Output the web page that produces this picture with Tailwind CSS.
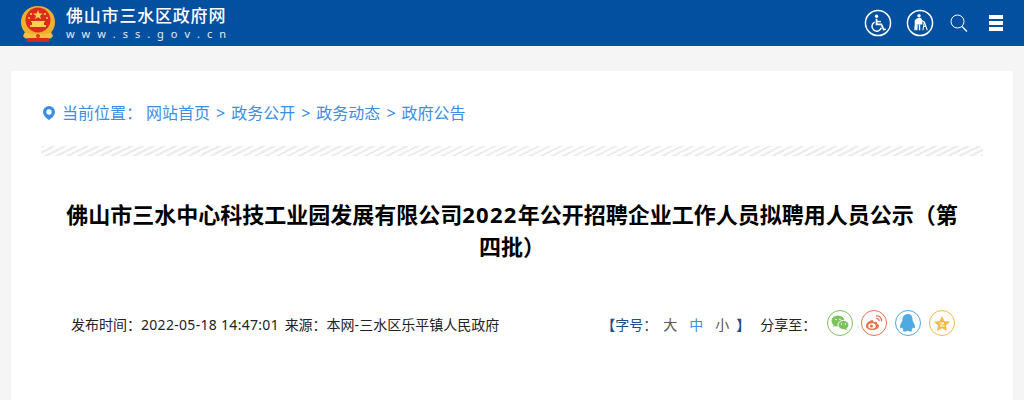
<!DOCTYPE html>
<html lang="zh-CN">
<head>
<meta charset="utf-8">
<script src="https://cdn.jsdelivr.net/npm/@tailwindcss/browser@4"></script>
</head>
<body class="m-0 h-[400px] w-[1024px] overflow-hidden bg-[#f5f5f5] font-['Noto_Sans','Noto_Sans_CJK_SC',sans-serif]">
<header class="flex h-[46px] items-center justify-between bg-[#02509f] pl-[20px] pr-[21px] text-white">
  <div class="flex items-center gap-[10px]">
    <svg class="h-[40px] w-[36px]" viewBox="0 0 36 40">
      <path d="M18 3C8 3 1 10 1 19c0 6 3 10 7 13h20c4-3 7-7 7-13C35 10 28 3 18 3z" fill="#eeb02f"/>
      <circle cx="18" cy="17" r="12.5" fill="#de2a1c"/>
      <path d="M18 7l1.300 3.600h3.700l-3 2.200 1.100 3.500-3.100-2.100-3.100 2.100 1.100-3.500-3-2.200h3.700z" fill="#f6d34a"/>
      <circle cx="11" cy="11" r="1.100" fill="#f6d34a"/><circle cx="25" cy="11" r="1.100" fill="#f6d34a"/><circle cx="9" cy="15" r="1" fill="#f6d34a"/><circle cx="27" cy="15" r="1" fill="#f6d34a"/>
      <path d="M10 24h16v-2h-2v-3h1v-1H11v1h1v3h-2z" fill="#f6d34a"/>
      <path d="M5 29c4 3 8 2 13 2s9 1 13-2l2 4c-2 3-4 3-6 2H9c-2 1-4 1-6-2z" fill="#f2c043"/>
      <path d="M8 35h20l2 3c-2 1-3 1-4 1H10c-1 0-2 0-4-1z" fill="#d8281b"/>
      <circle cx="18" cy="33" r="2" fill="#e0352a"/>
    </svg>
    <div class="flex w-[160px] flex-col">
      <div class="text-[17px] leading-[20px] font-medium tracking-[0.8px] whitespace-nowrap">佛山市三水区政府网</div>
      <div class="mt-[2px] flex justify-between text-[11px] leading-[12px] tracking-normal text-[#e3ecf6]">
        <span>w</span><span>w</span><span>w</span><span>.</span><span>s</span><span>s</span><span>.</span><span>g</span><span>o</span><span>v</span><span>.</span><span>c</span><span>n</span>
      </div>
    </div>
  </div>
  <div class="flex items-center">
    <svg class="h-[28px] w-[28px]" viewBox="0 0 29 29" fill="none" stroke="#fff">
      <circle cx="14.500" cy="14.500" r="13" stroke-width="1.500"/>
      <circle cx="13" cy="7.500" r="1.700" fill="#fff" stroke="none"/>
      <path d="M13 10v6h5l2.500 5.500 2-.8" stroke-width="1.800"/>
      <path d="M13 13h4.500" stroke-width="1.500"/>
      <path d="M11 13.500a5 5 0 1 0 7 6" stroke-width="1.500"/>
    </svg>
    <svg class="ml-[14px] h-[28px] w-[28px]" viewBox="0 0 29 29" fill="none" stroke="#fff">
      <circle cx="14.500" cy="14.500" r="13" stroke-width="1.500"/>
      <circle cx="13.500" cy="7" r="1.800" fill="#fff" stroke="none"/>
      <path d="M9 12c1-2 3-3 5-3s3 2 3 4v3h-6l-1 6h-1.500l.5-6z" fill="#fff" stroke="none"/>
      <path d="M11.500 16l-.5 6M14 16v6" stroke-width="1.500"/>
      <path d="M16 12l3 1.500M19 13l-1.500 9M19 13l3 9M18 18h3" stroke-width="1.100"/>
    </svg>
    <svg class="ml-[16px] h-[18px] w-[18px]" viewBox="0 0 18 18" fill="none" stroke="#fff">
      <circle cx="7.500" cy="7.500" r="6.500" stroke-width="1"/>
      <path d="M12 12.500l5 5" stroke-width="1.200"/>
    </svg>
    <div class="ml-[21px] flex w-[14px] flex-col gap-[2.500px]">
      <div class="h-[3.500px] bg-white"></div><div class="h-[3.500px] bg-white"></div><div class="h-[3.500px] bg-white"></div>
    </div>
  </div>
</header>
<main class="mx-[11px] mt-[25px] h-[340px] bg-white px-[30px] pt-[29px]">
  <nav class="flex h-[26px] items-center text-[16px] leading-[26px] whitespace-nowrap text-[#3a8ee6]">
    <svg class="ml-[2px] h-[14px] w-[12px]" viewBox="0 0 12 14"><path fill-rule="evenodd" d="M6 0a6 6 0 0 1 6 6c0 3-3 6-6 8-3-2-6-5-6-8a6 6 0 0 1 6-6zm0 3.300a2.700 2.700 0 1 0 0 5.400 2.700 2.700 0 0 0 0-5.400z" fill="#3a8ee6"/></svg>
    <span class="ml-[7px]">当前位置：</span>
    <span class="ml-[4px]">网站首页</span><span class="mx-[6px]">&gt;</span><span>政务公开</span><span class="mx-[6px]">&gt;</span><span>政务动态</span><span class="mx-[6px]">&gt;</span><span>政府公告</span>
  </nav>
  <div class="mt-[20px] h-[10px] bg-[repeating-linear-gradient(153deg,#ececec_0,#ececec_2px,#fdfdfd_2px,#fdfdfd_5px)]"></div>
  <h1 class="mt-[42px] px-[24px] text-center text-[22px] leading-[32px] font-bold text-black">佛山市三水中心科技工业园发展有限公司<span class="tracking-[1.300px]">2022</span>年公开招聘企业工作人员拟聘用人员公示（第四批）</h1>
  <div class="mt-[49px] flex h-[26px] items-center text-[14px] whitespace-nowrap text-[#222]">
    <span class="ml-[30px]">发布时间：<span class="tracking-[0.300px]">2022-05-18 14:47:01</span> <span class="ml-[2px]">来源：本网-三水区乐平镇人民政府</span></span>
    <span class="ml-[102px] font-bold text-[#1a4f86]">【</span><span class="text-[#1a4f86]">字号：</span>
    <span class="ml-[6px] text-[#555]">大</span><span class="ml-[12px] text-[#3a8ee6]">中</span><span class="ml-[12px] text-[#555]">小</span>
    <span class="ml-[7px] font-bold text-[#1a4f86]">】</span>
    <span class="ml-[10px]">分享至：</span>
    <div class="mb-[2px] ml-[11px] flex gap-[8px]">
      <div class="flex h-[26px] w-[26px] items-center justify-center rounded-full border border-[#7cc35a]">
        <svg class="h-[16px] w-[18px]" viewBox="0 0 18 16" fill="#7cc35a"><ellipse cx="7" cy="6" rx="6.500" ry="5.500"/><path d="M3 9l-1 3 4-2z"/><ellipse cx="12.500" cy="10" rx="5.500" ry="4.600" stroke="#fff" stroke-width="1"/><path d="M15 13l1.500 2.500-4-1.500z"/><circle cx="5" cy="4.500" r=".8" fill="#fff"/><circle cx="9" cy="4.500" r=".8" fill="#fff"/><circle cx="10.500" cy="9" r=".7" fill="#fff"/><circle cx="14.500" cy="9" r=".7" fill="#fff"/></svg>
      </div>
      <div class="flex h-[26px] w-[26px] items-center justify-center rounded-full border border-[#e8734a]">
        <svg class="h-[16px] w-[18px]" viewBox="0 0 18 16" fill="none"><path d="M7 5C3.500 6 1 8.500 1 11c0 2.500 3 4 6.500 4S14 13 14 11c0-1.500-1.500-2-2-2 1-2-1-3-3.500-1.500 .3-1.500-.3-2.700-1.500-2.500z" fill="#e8734a"/><ellipse cx="7" cy="11" rx="3.700" ry="2.800" fill="#fff"/><circle cx="6.500" cy="11" r="1.600" fill="#e8734a"/><path d="M11 1c3.500-.5 6 2 5.500 5.500M11.300 3.500c1.800-.2 3 .9 2.800 2.700" stroke="#e8734a" stroke-width="1.300"/></svg>
      </div>
      <div class="flex h-[26px] w-[26px] items-center justify-center rounded-full border border-[#4fa9e3]">
        <svg class="h-[18px] w-[16px]" viewBox="0 0 16 18" fill="#4fa9e3"><path d="M8 0c3 0 4.500 2.300 4.500 5 0 1 0 1.500.5 2.500 1 1.500 2 3.500 2 5.500 0 1.500-1 1.500-2 .5-.3 1-1 1.800-1.500 2.200 1 .5 1 1.800-1.500 1.800-1 0-2-.5-2-.8h-1c0 .3-1 .8-2 .8-2.500 0-2.500-1.300-1.500-1.800C3 15.300 2.300 14.500 2 13.500c-1 1-2 1-2-.5 0-2 1-4 2-5.500.5-1 .5-1.500.5-2.500C2.500 2.300 5 0 8 0z"/></svg>
      </div>
      <div class="flex h-[26px] w-[26px] items-center justify-center rounded-full border border-[#f5b94a]">
        <svg class="h-[15px] w-[16px]" viewBox="0 0 16 15"><path d="M8 0l2.400 5 5.600.7-4.100 3.700 1.100 5.600-5-2.800L3 15l1.100-5.600L0 5.700 5.600 5z" fill="#f5b94a"/><path d="M5.500 7h4.500l-4 3h4.500" stroke="#fff" stroke-width="1" fill="none"/></svg>
      </div>
    </div>
  </div>
</main>
</body>
</html>
